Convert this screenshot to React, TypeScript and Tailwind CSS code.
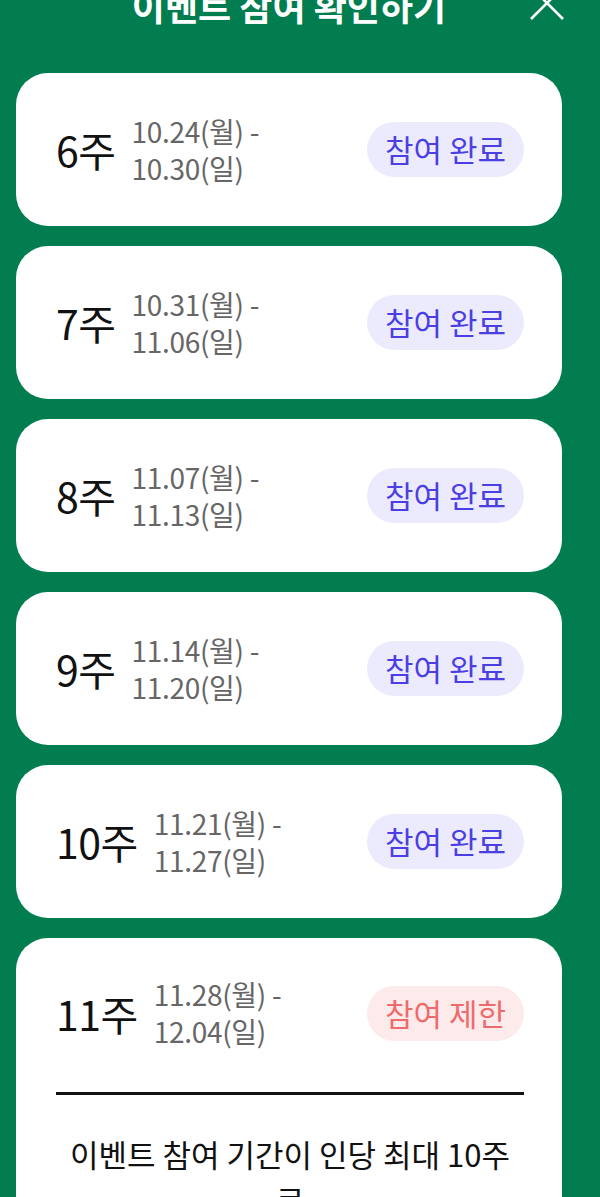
import React from 'react';

type Week = {
  week: string;
  start: string;
  end: string;
  status: 'done' | 'limited';
};

const weeks: Week[] = [
  { week: '6주', start: '10.24(월) -', end: '10.30(일)', status: 'done' },
  { week: '7주', start: '10.31(월) -', end: '11.06(일)', status: 'done' },
  { week: '8주', start: '11.07(월) -', end: '11.13(일)', status: 'done' },
  { week: '9주', start: '11.14(월) -', end: '11.20(일)', status: 'done' },
  { week: '10주', start: '11.21(월) -', end: '11.27(일)', status: 'done' },
  { week: '11주', start: '11.28(월) -', end: '12.04(일)', status: 'limited' },
];

function WeekRow({ item }: { item: Week }) {
  return (
    <div className="flex items-center justify-between">
      <div className="flex items-center gap-4">
        <span className="text-[41px] leading-none text-[#111111] tracking-[-0.5px]">{item.week}</span>
        <div className="text-[28px] leading-[37px] text-[#666666] tracking-[-0.3px]">
          <div>{item.start}</div>
          <div>{item.end}</div>
        </div>
      </div>
      {item.status === 'done' ? (
        <span className="flex h-[55px] items-center rounded-full bg-[#ecebfd] px-[18px] text-[31px] text-[#4b3fe3]">
          참여 완료
        </span>
      ) : (
        <span className="flex h-[55px] items-center rounded-full bg-[#fdeaea] px-[18px] text-[31px] text-[#ef6a6c]">
          참여 제한
        </span>
      )}
    </div>
  );
}

export default function App() {
  return (
    <div
      className="h-[1197px] w-[600px] overflow-hidden bg-[#017d50]"
      style={{ fontFamily: '"Noto Sans CJK KR", "Noto Sans", sans-serif' }}
    >
      <div className="w-[578px]">
        {/* 헤더 */}
        <div className="relative -mt-[24px] flex h-[97px] items-start justify-center">
          <h1 className="mt-[4px] text-[36px] font-bold leading-[50px] text-white">이벤트 참여 확인하기</h1>
          <button className="absolute right-[13px] top-[9px] text-white">
            <svg width="36" height="36" viewBox="0 0 36 36" fill="none" stroke="currentColor" strokeWidth="2.6">
              <line x1="2" y1="2" x2="34" y2="34" />
              <line x1="34" y1="2" x2="2" y2="34" />
            </svg>
          </button>
        </div>

        {/* 주차 목록 */}
        <div className="flex flex-col gap-5 px-4">
          {weeks.map((item) =>
            item.status === 'limited' ? (
              <div key={item.week} className="rounded-[32px] bg-white pl-10 pr-[38px] pt-[38px] pb-10">
                <WeekRow item={item} />
                <div className="mt-[42px] h-[3px] bg-[#111111]" />
                <p className="mt-[36px] whitespace-nowrap text-center text-[31px] leading-[46px] text-[#111111]">
                  이벤트 참여 기간이 인당 최대 10주
                  <br />로
                </p>
              </div>
            ) : (
              <div key={item.week} className="flex h-[153px] flex-col justify-center rounded-[32px] bg-white pl-10 pr-[38px]">
                <WeekRow item={item} />
              </div>
            )
          )}
        </div>
      </div>
    </div>
  );
}
